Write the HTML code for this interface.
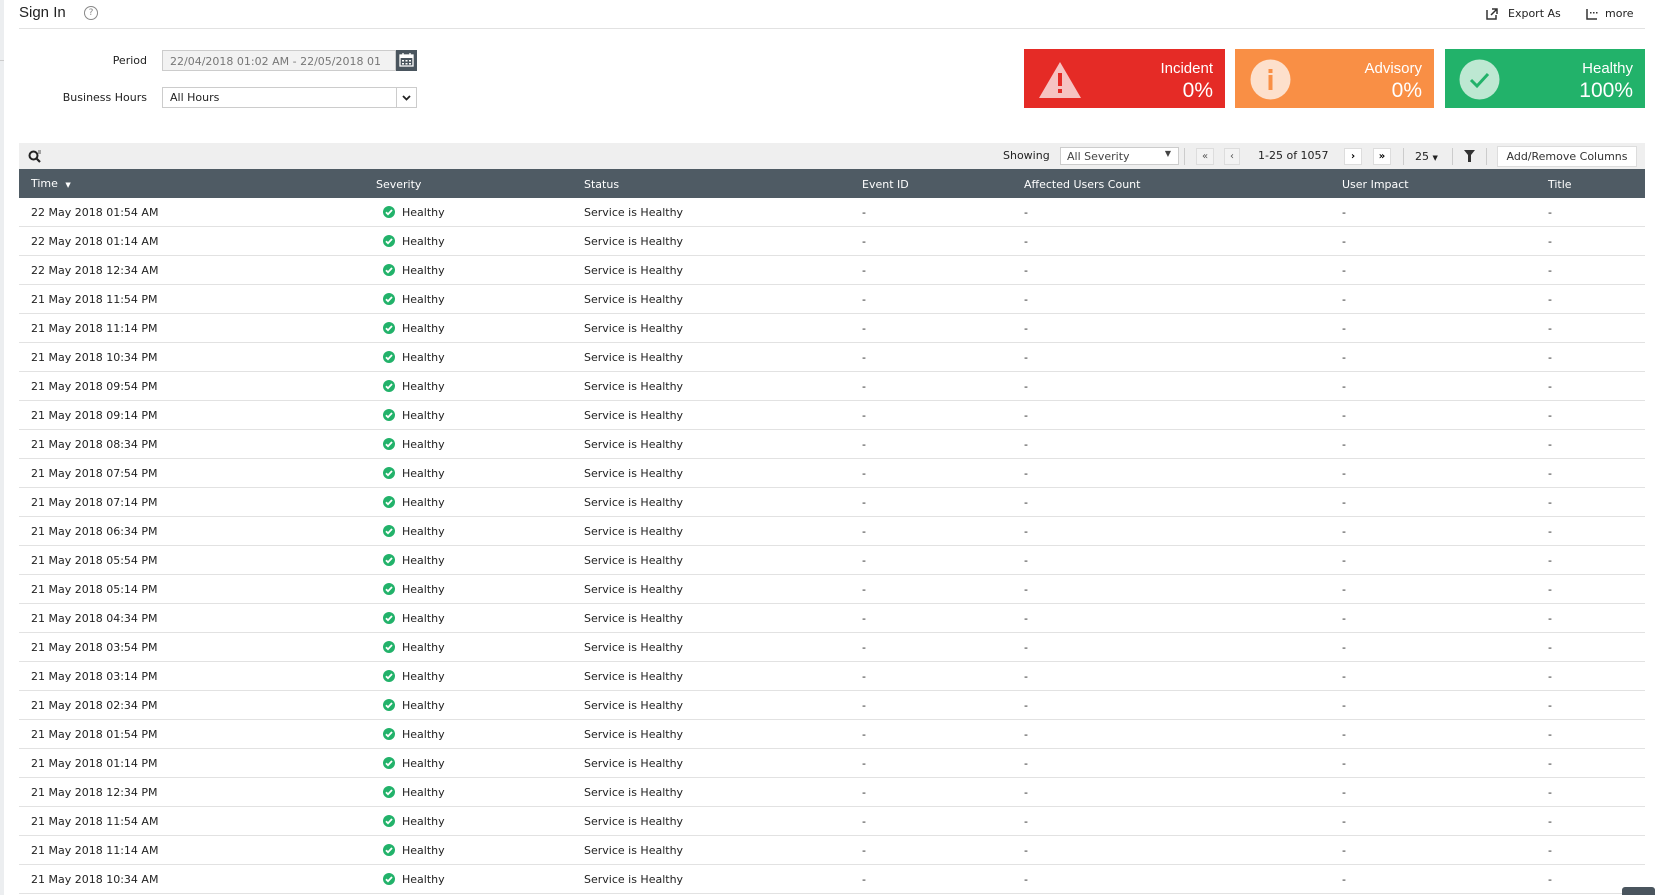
<!DOCTYPE html>
<html><head><meta charset="utf-8"><style>
*{box-sizing:border-box;margin:0;padding:0}
body{width:1661px;height:895px;overflow:hidden;background:#fff;font-family:"DejaVu Sans",Verdana,sans-serif;font-size:11px;color:#222;position:relative}
.a{position:absolute;white-space:nowrap}
.card{position:absolute;top:49px;height:59px;color:#fff;font-family:"Liberation Sans",sans-serif}
.card .t{position:absolute;right:12px;top:11px;font-size:15px}
.card .v{position:absolute;right:12px;top:30px;font-size:21px}
.row{position:absolute;left:19px;width:1626px;height:29px;border-bottom:1px solid #e2e2e2}
.row span{position:absolute;top:8px}
.pb{position:absolute;top:148px;height:17px;border:1px solid #ddd;background:#f3f3f3;font-size:10px;text-align:center;line-height:15px;color:#555}
</style></head><body>
<div class="a" style="left:0;top:0;width:4px;height:895px;background:#eceef0"></div>
<div class="a" style="left:0;top:60px;width:4px;height:1px;background:#ccc"></div>
<div class="a" style="left:19px;top:4px;font-family:'Liberation Sans',sans-serif;font-size:15px;color:#222">Sign In</div>
<div class="a" style="left:84px;top:6px;width:14px;height:14px;border:1px solid #888;border-radius:50%;font-size:9px;text-align:center;line-height:12px;color:#888">?</div>
<div class="a" style="left:19px;top:28px;width:1626px;height:1px;background:#e2e2e2"></div>
<svg class="a" style="left:1486px;top:8px" width="12" height="12" viewBox="0 0 12 12"><path d="M1 2v9h9V7M6 1h5v5M11 1L5 7" stroke="#333" stroke-width="1.5" fill="none"/></svg>
<div class="a" style="left:1508px;top:7px;font-size:11px">Export As</div>
<svg class="a" style="left:1586px;top:8px" width="12" height="12" viewBox="0 0 12 12"><path d="M1 1v10h10" stroke="#333" stroke-width="1.5" fill="none"/><rect x="4" y="4" width="1.5" height="1.5" fill="#333"/><rect x="7" y="4" width="1.5" height="1.5" fill="#333"/><rect x="10" y="4" width="1.5" height="1.5" fill="#333"/></svg>
<div class="a" style="left:1605px;top:7px;font-size:11px">more</div>

<div class="a" style="left:0;width:147px;top:54px;text-align:right;font-size:11px">Period</div>
<div class="a" style="left:162px;top:50px;width:234px;height:21px;border:1px solid #ccc;background:#f2f2f2;color:#777;padding:4px 0 0 7px;overflow:hidden">22/04/2018 01:02 AM - 22/05/2018 01</div>
<div class="a" style="left:396px;top:50px;width:21px;height:21px;background:#4a555e"><svg width="21" height="21" viewBox="0 0 21 21"><rect x="4" y="5" width="13" height="11" fill="none" stroke="#fff" stroke-width="1.3"/><rect x="4" y="5" width="13" height="3" fill="#fff"/><path d="M7 3v3M14 3v3" stroke="#fff" stroke-width="1.3"/><g fill="#fff"><rect x="6" y="10" width="2" height="1.5"/><rect x="9.5" y="10" width="2" height="1.5"/><rect x="13" y="10" width="2" height="1.5"/><rect x="6" y="13" width="2" height="1.5"/><rect x="9.5" y="13" width="2" height="1.5"/><rect x="13" y="13" width="2" height="1.5"/></g></svg></div>
<div class="a" style="left:0;width:147px;top:91px;text-align:right;font-size:11px">Business Hours</div>
<div class="a" style="left:162px;top:87px;width:255px;height:21px;border:1px solid #ccc;background:#fff;padding:3px 0 0 7px">All Hours<div class="a" style="right:0;top:0;width:20px;height:19px;border-left:1px solid #ccc"><svg width="19" height="19" viewBox="0 0 19 19"><path d="M6 8l3.5 3.5L13 8" stroke="#222" stroke-width="1.8" fill="none"/></svg></div></div>

<div class="card" style="left:1024px;width:201px;background:#e52b26"><svg style="position:absolute;left:14px;top:12px" width="44" height="38" viewBox="0 0 44 38"><path d="M22 1L43 37H1Z" fill="#f6c3c2"/><rect x="20" y="12" width="4" height="13" fill="#e52b26"/><rect x="20" y="28" width="4" height="4" fill="#e52b26"/></svg><div class="t">Incident</div><div class="v">0%</div></div>
<div class="card" style="left:1235px;width:199px;background:#f98f45"><svg style="position:absolute;left:15px;top:10px" width="41" height="41" viewBox="0 0 41 41"><ellipse cx="20.5" cy="20.5" rx="20" ry="20" fill="#fde0cc"/><rect x="18.5" y="16" width="4" height="15" fill="#f98f45"/><rect x="18.5" y="10" width="4" height="4" fill="#f98f45"/></svg><div class="t">Advisory</div><div class="v">0%</div></div>
<div class="card" style="left:1445px;width:200px;background:#22b26a"><svg style="position:absolute;left:14px;top:10px" width="41" height="41" viewBox="0 0 41 41"><circle cx="20.5" cy="20.5" r="20" fill="#bde8d2"/><path d="M12 21l6 6 11-12" stroke="#22b26a" stroke-width="3" fill="none"/></svg><div class="t">Healthy</div><div class="v">100%</div></div>

<div class="a" style="left:19px;top:143px;width:1626px;height:26px;background:#efefef"></div>
<svg class="a" style="left:28px;top:149px" width="14" height="14" viewBox="0 0 14 14"><circle cx="5.5" cy="6.5" r="4" stroke="#222" stroke-width="2" fill="none"/><path d="M8 9l4 4" stroke="#222" stroke-width="2.2"/><path d="M10 2h3M10 4h3" stroke="#222" stroke-width="0.8"/></svg>
<div class="a" style="left:1003px;top:149px">Showing</div>
<div class="a" style="left:1060px;top:147px;width:119px;height:18px;border:1px solid #ccc;background:#fff;padding:2px 0 0 6px;color:#444">All Severity<span style="position:absolute;right:7px;top:1px;font-size:8px">&#9660;</span></div>
<div class="a" style="left:1184px;top:148px;width:1px;height:17px;background:#ccc"></div>
<div class="pb" style="left:1196px;width:18px">&laquo;</div>
<div class="pb" style="left:1224px;width:16px">&lsaquo;</div>
<div class="a" style="left:1258px;top:149px">1-25 of 1057</div>
<div class="pb" style="left:1344px;width:18px;background:#fff;color:#000;font-weight:bold">&rsaquo;</div>
<div class="pb" style="left:1373px;width:18px;background:#fff;color:#000;font-weight:bold">&raquo;</div>
<div class="a" style="left:1403px;top:148px;width:1px;height:17px;background:#ccc"></div>
<div class="a" style="left:1415px;top:150px">25 <span style="font-size:7px">&#9660;</span></div>
<div class="a" style="left:1452px;top:148px;width:1px;height:17px;background:#ccc"></div>
<svg class="a" style="left:1464px;top:150px" width="11" height="12" viewBox="0 0 11 12"><path d="M0 0h11L7 5v7H4V5Z" fill="#333"/></svg>
<div class="a" style="left:1486px;top:148px;width:1px;height:17px;background:#ccc"></div>
<div class="a" style="left:1497px;top:146px;width:140px;height:21px;border:1px solid #ddd;background:#fff;text-align:center;line-height:19px;color:#333">Add/Remove Columns</div>

<div class="a" style="left:19px;top:169px;width:1626px;height:29px;background:#4f5b64;color:#fff"></div>
<div class="a" style="left:31px;top:177px;color:#fff">Time <span style="font-size:7px;margin-left:4px">&#9660;</span></div>
<div class="a" style="left:376px;top:178px;color:#fff">Severity</div>
<div class="a" style="left:584px;top:178px;color:#fff">Status</div>
<div class="a" style="left:862px;top:178px;color:#fff">Event ID</div>
<div class="a" style="left:1024px;top:178px;color:#fff">Affected Users Count</div>
<div class="a" style="left:1342px;top:178px;color:#fff">User Impact</div>
<div class="a" style="left:1548px;top:178px;color:#fff">Title</div>

<div id="rows"></div>
<div class="a" style="left:1622px;top:887px;width:33px;height:8px;background:#4a555e;border-radius:3px 3px 0 0"></div>
<script>
var t=["22 May 2018 01:54 AM","22 May 2018 01:14 AM","22 May 2018 12:34 AM","21 May 2018 11:54 PM","21 May 2018 11:14 PM","21 May 2018 10:34 PM","21 May 2018 09:54 PM","21 May 2018 09:14 PM","21 May 2018 08:34 PM","21 May 2018 07:54 PM","21 May 2018 07:14 PM","21 May 2018 06:34 PM","21 May 2018 05:54 PM","21 May 2018 05:14 PM","21 May 2018 04:34 PM","21 May 2018 03:54 PM","21 May 2018 03:14 PM","21 May 2018 02:34 PM","21 May 2018 01:54 PM","21 May 2018 01:14 PM","21 May 2018 12:34 PM","21 May 2018 11:54 AM","21 May 2018 11:14 AM","21 May 2018 10:34 AM"];
var h="",ic='<svg style="position:absolute;left:364px;top:8px" width="12" height="12" viewBox="0 0 12 12"><circle cx="6" cy="6" r="6" fill="#22b26a"/><path d="M3 6.2l2 2 4-4.2" stroke="#fff" stroke-width="1.8" fill="none"/></svg>';
for(var i=0;i<t.length;i++){h+='<div class="row" style="top:'+(198+i*29)+'px"><span style="left:12px">'+t[i]+'</span>'+ic+'<span style="left:383px">Healthy</span><span style="left:565px">Service is Healthy</span><span style="left:843px">-</span><span style="left:1005px">-</span><span style="left:1323px">-</span><span style="left:1529px">-</span></div>';}
document.getElementById("rows").innerHTML=h;
</script>
</body></html>
